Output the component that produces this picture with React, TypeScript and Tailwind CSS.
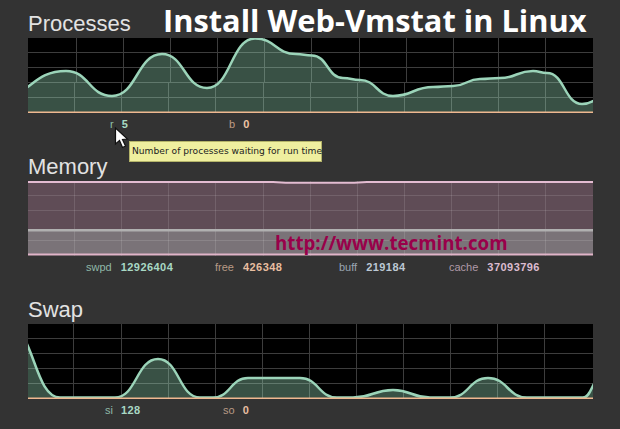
const CHART_W = 565;
const CHART_H = 75;

type Pt = [number, number];

// Same bezier the chart lib uses: flat tangent at every sample
function smooth(points: Pt[]) {
  let d = `M${points[0][0]} ${points[0][1]}`;
  for (let i = 1; i < points.length; i++) {
    const [x0, y0] = points[i - 1];
    const [x1, y1] = points[i];
    const mid = (x0 + x1) / 2;
    d += ` C${mid} ${y0} ${mid} ${y1} ${x1} ${y1}`;
  }
  return d;
}

// points are page coordinates, converted to the chart's own box
const toLocal = (pts: Pt[], top: number): Pt[] => pts.map(([x, y]) => [x - 28, y - top]);

// first and last samples sit outside the chart, the line runs off its edges
const processPts = toLocal(
  [
    [-4, 98], [66, 71], [112, 96], [162, 54], [207, 88], [255, 38.5], [296, 54], [312, 55.5],
    [343, 78], [360, 80], [393, 96], [433, 87], [453, 86], [480, 79], [500, 78], [533, 71],
    [547, 73], [582, 104], [606, 97],
  ],
  38
);

const swapPts = toLocal(
  [
    [8, 326], [60, 397.5], [115, 397.5], [158, 359], [200, 397.5], [213, 397.5], [248, 378],
    [300, 378], [337, 397.5], [353, 397.5], [393, 390], [430, 397.5], [450, 397.5], [488, 378],
    [527, 397.5], [583, 397.5], [601, 378],
  ],
  324
);

const memoryDip: Pt[] = toLocal(
  [[28, 182], [273, 182], [290, 182.8], [350, 182.8], [367, 182], [593, 182]],
  181
);

const procTop = [48, 95, 142, 189, 236, 283, 331, 378, 425, 470, 517];
const procBottom = [46, 93, 140, 187, 235, 282, 329, 376, 423, 470, 517];
const swapLines = [45, 93, 140, 187, 234, 281, 328, 375, 422, 469, 516];
const memLines = [46, 93, 140, 187, 235, 282, 329, 376, 423, 470, 517];

function GridLines({ rows, top, bottom, split, color }: { rows: number[]; top: number[]; bottom: number[]; split: number; color: string }) {
  return (
    <g stroke={color} strokeWidth="1">
      {rows.map((y) => (
        <line key={y} x1="0" x2={CHART_W} y1={y + 0.5} y2={y + 0.5} />
      ))}
      {top.map((x) => (
        <line key={x} x1={x + 0.5} x2={x + 0.5} y1="0" y2={split} />
      ))}
      {bottom.map((x) => (
        <line key={x} x1={x + 0.5} x2={x + 0.5} y1={split} y2={CHART_H} />
      ))}
    </g>
  );
}

function LineChart({ pts, top, bottom, split }: { pts: Pt[]; top: number[]; bottom: number[]; split: number }) {
  const line = smooth(pts);
  const firstX = pts[0][0];
  const lastX = pts[pts.length - 1][0];
  return (
    <svg width={CHART_W} height={CHART_H} viewBox={`0 0 ${CHART_W} ${CHART_H}`} className="block bg-black">
      <GridLines rows={[14, 29, 44, 59]} top={top} bottom={bottom} split={split} color="#3d3d3d" />
      <path d={`${line} L${lastX} 75 L${firstX} 75 Z`} fill="#9fe0c0" fillOpacity="0.36" />
      <path d={line} fill="none" stroke="#9bd4b9" strokeWidth="2.5" />
      <rect x="0" y="73.5" width={CHART_W} height="1.5" fill="#efb890" />
    </svg>
  );
}

function MemoryChart() {
  return (
    <svg width={CHART_W} height={CHART_H} viewBox={`0 0 ${CHART_W} ${CHART_H}`} className="block">
      <rect width={CHART_W} height={CHART_H} fill="#333333" />
      <rect y="1" width={CHART_W} height="48" fill="#5f4c56" />
      <rect y="49" width={CHART_W} height="25" fill="#7a7378" />
      <GridLines rows={[14, 29, 59]} top={memLines} bottom={memLines} split={40} color="#ffffff1f" />
      <rect y="48" width={CHART_W} height="2.5" fill="#b0b0b0" />
      <path d={smooth(memoryDip)} fill="none" stroke="#e4bcd2" strokeWidth="2" />
      <rect y="72.5" width={CHART_W} height="2" fill="#e0b4c8" />
    </svg>
  );
}

function Stat({ label, value, width, labelColor, valueColor, gap = "gap-[8px]" }: { label: string; value: string; width: string; labelColor: string; valueColor: string; gap?: string }) {
  return (
    <div className={`flex ${gap} ${width}`}>
      <span className={labelColor}>{label}</span>
      <span className={`font-bold tracking-[0.45px] ${valueColor}`}>{value}</span>
    </div>
  );
}

function Section({ title, children, stats }: { title: string; children: React.ReactNode; stats: React.ReactNode }) {
  return (
    <section className="h-[143px]">
      <h2 className="h-[26px] text-[22px] leading-[24px] text-[#e2e2e2]">{title}</h2>
      {children}
      {stats}
    </section>
  );
}

export default function App() {
  return (
    <div className="relative h-[429px] w-[620px] overflow-hidden bg-[#333333] pl-[28px] pt-[12px] font-['Liberation_Sans',sans-serif]">
      <Section
        title="Processes"
        stats={
          <div className="flex pl-[82px] text-[11px] leading-[22px]">
            <Stat label="r" value="5" width="w-[119px]" labelColor="text-[#8fc0ac]" valueColor="text-[#a8dcc4]" />
            <Stat label="b" value="0" width="w-[100px]" labelColor="text-[#c09c84]" valueColor="text-[#eec4a4]" />
          </div>
        }
      >
        <LineChart pts={processPts} top={procTop} bottom={procBottom} split={44} />
      </Section>

      <Section
        title="Memory"
        stats={
          <div className="flex pl-[58px] text-[11px] leading-[22px]">
            <Stat label="swpd" value="12926404" width="w-[129px]" gap="gap-[9px]" labelColor="text-[#8fb8a8]" valueColor="text-[#a8d8c4]" />
            <Stat label="free" value="426348" width="w-[124px]" gap="gap-[9px]" labelColor="text-[#b89a85]" valueColor="text-[#e8bea0]" />
            <Stat label="buff" value="219184" width="w-[110px]" gap="gap-[9px]" labelColor="text-[#9aa5b2]" valueColor="text-[#bcc8d4]" />
            <Stat label="cache" value="37093796" width="w-[130px]" gap="gap-[9px]" labelColor="text-[#b09aa8]" valueColor="text-[#dcbcd0]" />
          </div>
        }
      >
        <MemoryChart />
      </Section>

      <Section
        title="Swap"
        stats={
          <div className="flex pl-[77px] text-[11px] leading-[22px]">
            <Stat label="si" value="128" width="w-[118px]" labelColor="text-[#8fb8a8]" valueColor="text-[#a8d8c4]" />
            <Stat label="so" value="0" width="w-[100px]" labelColor="text-[#b89a85]" valueColor="text-[#e8bea0]" />
          </div>
        }
      >
        <LineChart pts={swapPts} top={swapLines} bottom={swapLines} split={40} />
      </Section>

      {/* Caption pasted over the screenshot */}
      <div className="absolute left-[163px] top-0 whitespace-nowrap font-['Open_Sans',sans-serif] text-[30.8px] font-bold leading-[40px] text-white">
        Install Web-Vmstat in Linux
      </div>
      <div className="absolute left-[275px] top-[229px] whitespace-nowrap font-['Open_Sans',sans-serif] text-[18.7px] font-bold leading-[28px] text-[#99004a]">
        http://www.tecmint.com
      </div>

      {/* Tooltip and mouse pointer */}
      <div className="absolute left-[129px] top-[141px] flex h-[21px] w-[193px] items-center border border-[#b4b46a] bg-[#efef9f] pl-[2px] font-['DejaVu_Sans',sans-serif] text-[9.15px] text-[#222222] whitespace-nowrap">
        Number of processes waiting for run time
      </div>
      <svg className="absolute left-[114px] top-[127px]" width="16" height="23" viewBox="0 0 16 23">
        <path d="M1.5 1 L1.5 17 L5.5 13.5 L8.5 20.5 L11.5 19 L8.5 12.5 L13.5 12 Z" fill="#ffffff" stroke="#111111" strokeWidth="1.2" />
      </svg>
    </div>
  );
}
